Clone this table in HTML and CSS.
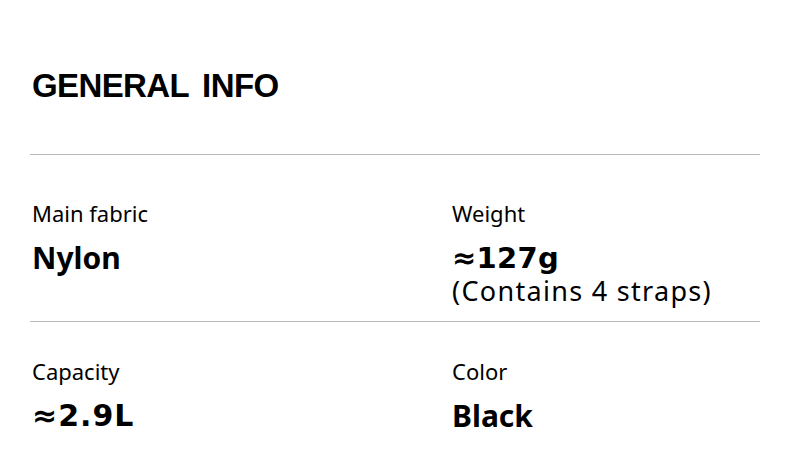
FILE: index.html
```html
<!DOCTYPE html>
<html>
<head>
<meta charset="utf-8">
<link rel="stylesheet" href="styles.css">
</head>
<body>
<div class="page">
  <h1 class="title">GENERAL INFO</h1>
  <div class="rule"></div>
  <div class="row row-first">
    <div class="cell cell-left">
      <div class="label">Main fabric</div>
      <div class="value">Nylon</div>
    </div>
    <div class="cell">
      <div class="label">Weight</div>
      <div class="value value-num">≈127g</div>
      <div class="sub">(Contains 4 straps)</div>
    </div>
  </div>
  <div class="rule"></div>
  <div class="row row-second">
    <div class="cell cell-left">
      <div class="label">Capacity</div>
      <div class="value value-num value-wide">≈2.9L</div>
    </div>
    <div class="cell">
      <div class="label">Color</div>
      <div class="value">Black</div>
    </div>
  </div>
</div>
</body>
</html>
```
FILE: styles.css
```css
html, body {
  margin: 0;
  padding: 0;
  background: #ffffff;
}
body {
  color: #000000;
  font-family: "Noto Sans", "Liberation Sans", sans-serif;
}
.page {
  width: 730px;
  margin-left: 30px;
}
.title {
  margin: 0;
  padding-top: 66px;
  padding-left: 2px;
  font-family: "Liberation Sans", Arial, sans-serif;
  font-weight: 700;
  font-size: 33px;
  line-height: 40px;
  letter-spacing: -0.6px;
  word-spacing: 5px;
  height: 40px;
}
.rule {
  height: 1px;
  background: #b8b8b8;
}
.title + .rule {
  margin-top: 48px;
}
.row {
  display: grid;
  grid-template-columns: 422px 1fr;
}
.row-first {
  padding-top: 43px;
  padding-bottom: 15px;
}
.row-second {
  padding-top: 34px;
}
.cell {
  display: flex;
  flex-direction: column;
}
.cell-left {
  padding-left: 2px;
}
.label {
  font-size: 22px;
  line-height: 30px;
}
.value {
  margin-top: 12px;
  font-weight: 700;
  font-size: 30px;
  line-height: 36px;
}
.value-num {
  font-family: "DejaVu Sans", "Noto Sans", sans-serif;
  font-size: 29px;
  letter-spacing: 0.3px;
}
.value-wide {
  font-size: 30px;
  letter-spacing: 1px;
}
.sub {
  font-size: 27px;
  line-height: 30px;
  letter-spacing: 1.3px;
}
```
